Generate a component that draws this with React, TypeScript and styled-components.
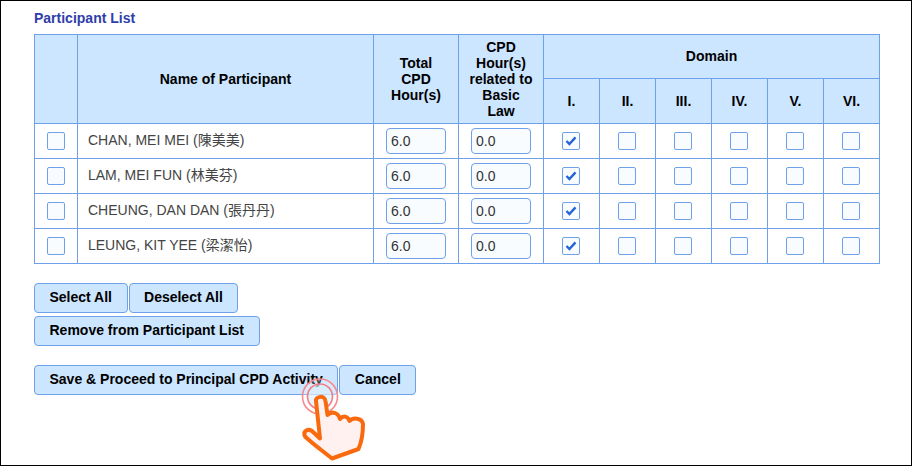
import React from "react";
import styled, { createGlobalStyle } from "styled-components";

const participants = [
  "CHAN, MEI MEI (陳美美)",
  "LAM, MEI FUN (林美芬)",
  "CHEUNG, DAN DAN (張丹丹)",
  "LEUNG, KIT YEE (梁潔怡)",
];
const domains = ["I.", "II.", "III.", "IV.", "V.", "VI."];

const App: React.FC = () => {
  return (
    <Frame>
      <GlobalStyle />
      <Heading>Participant List</Heading>
      <ListTable>
        <colgroup>
          <col width={43} />
          <col width={296} />
          <col width={85} />
          <col width={85} />
          {domains.map((d) => (
            <col key={d} width={56} />
          ))}
        </colgroup>
        <thead>
          <HeadRow $height={44}>
            <HeadCell rowSpan={2} />
            <HeadCell rowSpan={2}>Name of Participant</HeadCell>
            <HeadCell rowSpan={2}>
              Total
              <br />
              CPD
              <br />
              Hour(s)
            </HeadCell>
            <HeadCell rowSpan={2}>
              CPD
              <br />
              Hour(s)
              <br />
              related to
              <br />
              Basic
              <br />
              Law
            </HeadCell>
            <DomainHead colSpan={6}>Domain</DomainHead>
          </HeadRow>
          <HeadRow $height={45}>
            {domains.map((d) => (
              <HeadCell key={d}>{d}</HeadCell>
            ))}
          </HeadRow>
        </thead>
        <tbody>
          {participants.map((name) => (
            <tr key={name}>
              <BodyCell>
                <CheckBox />
              </BodyCell>
              <NameCell>{name}</NameCell>
              <BodyCell>
                <HourInput defaultValue="6.0" />
              </BodyCell>
              <BodyCell>
                <HourInput defaultValue="0.0" />
              </BodyCell>
              {domains.map((d, i) => (
                <DomainCell key={d}>
                  <CheckBox>
                    {i === 0 && (
                      <svg width="12" height="10" viewBox="0 0 12 10">
                        <path
                          d="M1.5 5 L4.4 8 L10.5 1.4"
                          fill="none"
                          stroke="#2563d8"
                          strokeWidth="2.4"
                        />
                      </svg>
                    )}
                  </CheckBox>
                </DomainCell>
              ))}
            </tr>
          ))}
        </tbody>
      </ListTable>
      <ButtonRow>
        <ActionButton>Select All</ActionButton>
        <ActionButton>Deselect All</ActionButton>
      </ButtonRow>
      <ButtonRow>
        <ActionButton>Remove from Participant List</ActionButton>
      </ButtonRow>
      <SubmitRow>
        <ActionButton>Save &amp; Proceed to Principal CPD Activity</ActionButton>
        <ActionButton>Cancel</ActionButton>
      </SubmitRow>
      <HandCursor viewBox="0 0 100 96" width="100" height="96">
        <circle cx="40" cy="26.5" r="17.5" fill="#fff" fillOpacity="0.25" stroke="#f7898f" strokeWidth="1.6" />
        <circle cx="40" cy="26.5" r="12.5" fill="#d8eefc" fillOpacity="0.6" stroke="#f47c83" strokeWidth="1.6" />
        <path
          d="M36 31 C35.5 26 45 25 45.5 31 L47.5 45 C51 41 58 42 60 49 C63 45 68 46 69.5 51 C73 47 82 48 83 54 C83 62 82 71 78.5 79 L52 88.5 C44 82 33 74 25.5 67 C22 62 27 58 32 61 L40 68.5 Z"
          fill="#fff1ef"
          stroke="#f96a0e"
          strokeWidth="4"
          strokeLinejoin="round"
        />
      </HandCursor>
    </Frame>
  );
};

export default App;

const GlobalStyle = createGlobalStyle`
  html, body {
    margin: 0;
    padding: 0;
    background: #fff;
  }
`;

const Frame = styled.div`
  position: relative;
  box-sizing: border-box;
  width: 912px;
  height: 466px;
  padding: 10px 33px 0;
  border: 1px solid #000;
  background: #fff;
  font-family: "Liberation Sans", "Noto Sans CJK TC", sans-serif;
  font-size: 14px;
  overflow: hidden;
`;

const Heading = styled.div`
  height: 23px;
  line-height: 14px;
  font-size: 14px;
  font-weight: bold;
  color: #2f3ea8;
`;

const ListTable = styled.table`
  table-layout: fixed;
  width: 846px;
  border-collapse: collapse;
  border: 1px solid #6ea1ea;
`;

const HeadRow = styled.tr<{ $height: number }>`
  height: ${(props) => props.$height}px;
`;

const HeadCell = styled.th`
  padding: 0;
  border: 1px solid #6ea1ea;
  background: #cce6ff;
  color: #000;
  font-size: 14px;
  line-height: 16px;
  text-align: center;
`;

const DomainHead = styled(HeadCell)`
  padding-bottom: 2px;
`;

const BodyCell = styled.td`
  height: 34px;
  padding: 0;
  border: 1px solid #6ea1ea;
  text-align: center;
  vertical-align: middle;
`;

const DomainCell = styled(BodyCell)`
  padding-right: 1px;
`;

const NameCell = styled.td`
  height: 32px;
  padding: 0 10px 2px;
  border: 1px solid #6ea1ea;
  color: #444;
  font-size: 14px;
  line-height: 16px;
`;

const CheckBox = styled.span`
  display: inline-flex;
  box-sizing: border-box;
  width: 18px;
  height: 18px;
  align-items: center;
  justify-content: center;
  border: 1px solid #6ea1ea;
  border-radius: 2px;
  background: #f8fcff;
  vertical-align: middle;
`;

const HourInput = styled.input`
  display: inline-block;
  box-sizing: border-box;
  width: 60px;
  height: 26px;
  padding: 0 4px;
  border: 1px solid #6ea1ea;
  border-radius: 4px;
  background: #f8fcff;
  color: #333;
  font-family: inherit;
  font-size: 14px;
  vertical-align: middle;
`;

const ButtonRow = styled.div`
  display: flex;
  gap: 1px;
  margin-top: 3px;

  table + & {
    margin-top: 19px;
  }
`;

const SubmitRow = styled(ButtonRow)`
  margin-top: 19px;
`;

const ActionButton = styled.button`
  box-sizing: border-box;
  height: 30px;
  padding: 0 14.5px 2px;
  border: 1px solid #6ea1ea;
  border-radius: 4px;
  background: #cce6ff;
  color: #000;
  font-family: inherit;
  font-size: 14px;
  font-weight: bold;
  white-space: nowrap;
`;

const HandCursor = styled.svg`
  position: absolute;
  left: 279px;
  top: 369px;
  pointer-events: none;
`;
